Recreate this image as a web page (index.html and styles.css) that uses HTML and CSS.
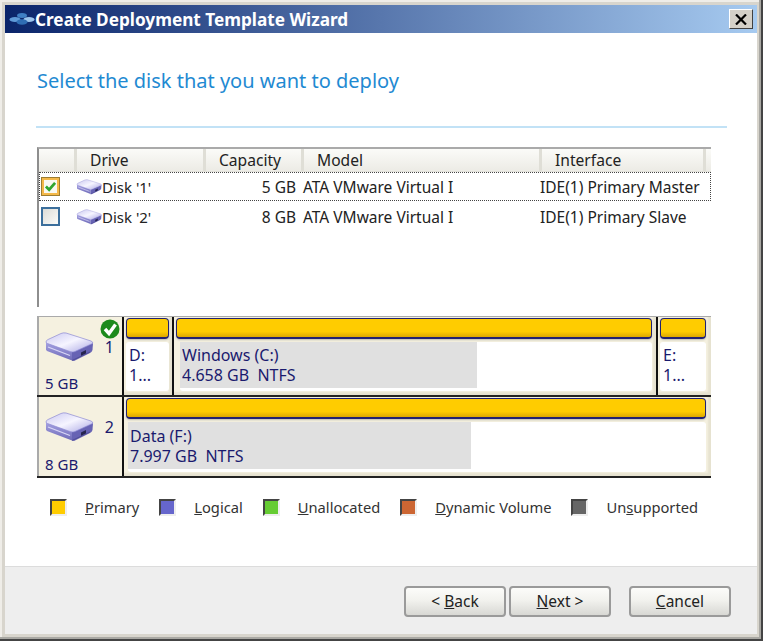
FILE: index.html
```html
<!DOCTYPE html>
<html lang="en">
<head>
<meta charset="utf-8">
<title>Create Deployment Template Wizard</title>
<link rel="stylesheet" href="styles.css">
</head>
<body>
<svg class="defs" width="0" height="0" aria-hidden="true">
  <defs>
    <linearGradient id="dtop" x1="0" y1="0" x2="1" y2="1"><stop offset="0" stop-color="#c9c7f0"/><stop offset=".5" stop-color="#f6f5ff"/><stop offset="1" stop-color="#a9a6e4"/></linearGradient>
    <linearGradient id="dleft" x1="0" y1="0" x2="0" y2="1"><stop offset="0" stop-color="#a5a2e2"/><stop offset="1" stop-color="#6f6bb8"/></linearGradient>
    <symbol id="disk" viewBox="0 0 50 30">
      <path d="M2 10 L28 20 L28 28.5 L3 19 Q1.500 18 2 16 Z" fill="url(#dleft)"/>
      <path d="M28 20 L49 11 L48.500 18 Q48 20 46 21 L30 29 L28 28.500 Z" fill="#6763b4"/>
      <path d="M2 10 Q2 8.500 4 7.500 L17 1.500 Q19 .5 22 1 L47 9 Q49.500 10 48.500 11.500 L31 19.500 Q29 20.500 26 19.500 L3.500 11.500 Q2 11 2 10 Z" fill="url(#dtop)" stroke="#8d89d2" stroke-width=".7"/>
      <path d="M4 15 L26 23.500" stroke="#d8d6f6" stroke-width="1.300" fill="none"/>
      <path d="M37 20.500 L42 18 L42 21.500 L37 24 Z" fill="#26254f"/>
      <path d="M28 28.500 L46 20" stroke="#4a478e" stroke-width=".8" fill="none"/>
    </symbol>
  </defs>
</svg>
<div class="window">
  <header class="titlebar">
    <svg class="app-icon" viewBox="0 0 26 14" aria-hidden="true">
      <ellipse cx="13" cy="3.500" rx="5" ry="2.500" fill="#3f7fc4"/>
      <ellipse cx="6" cy="7.500" rx="5.500" ry="2.500" fill="#5f9ad8"/>
      <ellipse cx="20" cy="7.500" rx="5.500" ry="2.500" fill="#9cc4ec"/>
      <ellipse cx="13" cy="10" rx="5.500" ry="2.800" fill="#2f6db4"/>
    </svg>
    <span class="title-text">Create Deployment Template Wizard</span>
    <button class="close" aria-label="Close">
      <svg viewBox="0 0 12 11" aria-hidden="true"><path d="M1 .5 L11 10.500 M11 .5 L1 10.500" stroke="#000" stroke-width="2.200" fill="none"/></svg>
    </button>
  </header>
  <main class="content">
    <h1 class="heading">Select the disk that you want to deploy</h1>
    <div class="rule"></div>

    <section class="list">
      <div class="row head">
        <span class="hcell"></span>
        <span class="hcell pad">Drive</span>
        <span class="hcell pad">Capacity</span>
        <span class="hcell pad">Model</span>
        <span class="hcell pad">Interface</span>
        <span class="hcell"></span>
      </div>
      <div class="row item focused">
        <span class="cell"><span class="check on"><svg viewBox="0 0 14 12" aria-hidden="true"><path d="M2 6 L5.500 9.500 L12 2" stroke="#2fa52f" stroke-width="3" fill="none"/></svg></span></span>
        <span class="cell"><svg class="mini-disk"><use href="#disk"/></svg>Disk '1'</span>
        <span class="cell wide cap">5 GB</span>
        <span class="cell wide">ATA VMware Virtual I</span>
        <span class="cell wide">IDE(1) Primary Master</span>
      </div>
      <div class="row item second-item">
        <span class="cell"><span class="check"></span></span>
        <span class="cell"><svg class="mini-disk"><use href="#disk"/></svg>Disk '2'</span>
        <span class="cell wide cap">8 GB</span>
        <span class="cell wide">ATA VMware Virtual I</span>
        <span class="cell wide">IDE(1) Primary Slave</span>
      </div>
    </section>

    <section class="map">
      <div class="disk-row">
        <div class="disk-info">
          <svg class="big-disk"><use href="#disk"/></svg>
          <span class="disk-num">1</span>
          <svg class="ok" viewBox="0 0 20 20" aria-hidden="true"><circle cx="10" cy="10" r="9.500" fill="#1c8a1c"/><path d="M5 10 L9 14.500 L15.500 5.500" stroke="#fff" stroke-width="3.400" fill="none"/></svg>
          <span class="disk-size">5 GB</span>
        </div>
        <div class="part small">
          <div class="bar"></div>
          <div class="part-body"><span>D:</span><span>1...</span></div>
        </div>
        <div class="part grow win">
          <div class="bar"></div>
          <div class="part-body">
            <div class="used used-win"></div>
            <span>Windows (C:)</span><span>4.658 GB&nbsp; NTFS</span>
          </div>
        </div>
        <div class="part small last">
          <div class="bar"></div>
          <div class="part-body"><span>E:</span><span>1...</span></div>
        </div>
      </div>
      <div class="disk-row second">
        <div class="disk-info">
          <svg class="big-disk"><use href="#disk"/></svg>
          <span class="disk-num">2</span>
          <span class="disk-size">8 GB</span>
        </div>
        <div class="part grow last">
          <div class="bar"></div>
          <div class="part-body">
            <div class="used used-data"></div>
            <span>Data (F:)</span><span>7.997 GB&nbsp; NTFS</span>
          </div>
        </div>
      </div>
    </section>

    <section class="legend">
      <span class="swatch s-primary"></span><span class="lg"><u>P</u>rimary</span>
      <span class="swatch s-logical"></span><span class="lg"><u>L</u>ogical</span>
      <span class="swatch s-unalloc"></span><span class="lg"><u>U</u>nallocated</span>
      <span class="swatch s-dynamic"></span><span class="lg"><u>D</u>ynamic Volume</span>
      <span class="swatch s-unsup"></span><span class="lg">Un<u>s</u>upported</span>
    </section>
  </main>
  <footer class="footer">
    <button class="btn">&lt; <u>B</u>ack</button>
    <button class="btn next"><u>N</u>ext &gt;</button>
    <button class="btn cancel"><u>C</u>ancel</button>
  </footer>
</div>
</body>
</html>
```

FILE: styles.css
```css
* { box-sizing: border-box; }
html, body { margin: 0; padding: 0; }
body { font-family: "Noto Sans", sans-serif; font-size: 15px; color: #222; background: #fff; }
.defs { position: absolute; }
.window {
  width: 763px; height: 641px; padding: 5px 6px 7px 5px;
  display: flex; flex-direction: column; overflow: hidden;
  background: #d8d5cd;
  box-shadow: inset -2px -2px 0 #444, inset -4px -4px 0 #a9a8a3, inset 2px 2px 0 #efede8;
}
.titlebar {
  height: 28px; flex: none; display: flex; align-items: center;
  padding: 0 4px 0 4px; color: #fff;
  background: linear-gradient(90deg, #0a246a 0%, #a6caf0 100%);
}
.app-icon { width: 26px; height: 14px; flex: none; }
.title-text { font-weight: 700; font-size: 17.200px; flex: 1; white-space: nowrap; }
.close {
  width: 24px; height: 20px; padding: 0; display: flex; align-items: center; justify-content: center;
  background: #d4d0c8; border: 1px solid; border-color: #fff #404040 #404040 #fff;
}
.close svg { width: 12px; height: 11px; }
.content { flex: 1; background: #fff; padding: 0 30px 0 31px; display: flex; flex-direction: column; min-height: 0; }
.heading {
  margin: 0; height: 93px; display: flex; align-items: center; padding: 1px 0 0 1px;
  font-size: 20px; font-weight: 400; color: #1f8ad2; white-space: nowrap;
}
.rule { height: 2px; background: #c2e2f6; flex: none; }

.list { margin: 19px 0 0 1px; width: 674px; height: 160px; flex: none; border-left: 2px solid #8e8e8e; border-top: 2px solid #aaa; }
.row { display: grid; align-items: center; }
.head { grid-template-columns: 38px 129px 98px 238px 164px 1fr; height: 23px; background: linear-gradient(#fbfbf8, #ecebe5); border-bottom: 1px solid #e2e1da; font-size: 15.600px; }
.hcell { height: 100%; display: flex; align-items: center; border-right: 3px solid #dfded6; }
.hcell.pad { padding-left: 13px; }
.hcell:last-child { border-right: none; }
.item { grid-template-columns: 36px 126px 101px 237px 1fr; height: 29px; border: 1px dotted transparent; }
.item.focused { border-color: #444; }
.second-item { margin-top: 1px; }
.cell { white-space: nowrap; display: flex; align-items: center; }
.cap { justify-content: flex-end; padding-right: 7px; }
.wide { font-size: 15.500px; }
.check {
  width: 19px; height: 19px; margin-left: 1px; display: flex; align-items: center; justify-content: center;
  border: 2px solid #3c6f9c; background: linear-gradient(135deg, #dcdcd7, #fbfbf9);
}
.check.on { border-color: #f4b848; box-shadow: 0 0 0 1px #9c7c30; background: #f8f8f2; width: 17px; height: 17px; margin-left: 2px; }
.check svg { width: 13px; height: 11px; }
.mini-disk { width: 26px; height: 16px; flex: none; }

.map { width: 674px; height: 162px; margin: 9px 0 0 1px; flex: none; border-top: 1px solid #aaa; background: #f5f1e0; }
.disk-row { height: 80px; display: flex; background: #111; gap: 2px; border-bottom: 2px solid #222; }
.disk-row.second { height: 81px; }
.disk-info { width: 85px; flex: none; position: relative; background: #f5f1e0; border-left: 2px solid #aaa; }
.big-disk { position: absolute; left: 5px; top: 15px; width: 50px; height: 30px; }
.disk-num { position: absolute; right: 8px; top: 19px; font-size: 16px; color: #1a1a6e; }
.disk-size { position: absolute; left: 6px; bottom: 2px; font-size: 15px; color: #1a1a6e; }
.ok { position: absolute; right: 2px; top: 2px; width: 20px; height: 20px; }
.part { background: #f5f1e0; padding: 1px 3px 4px 2px; display: flex; flex-direction: column; box-shadow: inset -3px -3px 2px #e6e2d0; }
.part.small { width: 48px; flex: none; }
.part.small.last { width: 53px; padding-right: 5px; }
.part.grow { flex: 1; }
.part.last { padding-right: 5px; }
.part.win { padding-right: 4px; }
.bar { height: 21px; flex: none; border: 1px solid #222270; border-bottom-width: 2px; border-radius: 4px; background: linear-gradient(#ffcc00 70%, #dca800); box-shadow: 0 1px 2px #bdbdb4; }
.part-body {
  flex: 1; margin-top: 3px; padding: 3px 0 0 3px; background: #fff; position: relative; border-radius: 3px;
  display: flex; flex-direction: column; color: #1a1a6e; font-size: 16px; line-height: 20px;
}
.win .part-body { margin-left: 4px; padding-left: 2px; }
.second .part-body { margin-left: 2px; padding: 4px 0 0 2px; }
.part-body span { position: relative; white-space: nowrap; overflow: hidden; }
.used { position: absolute; left: 0; top: 0; bottom: 3px; background: #e0e0e0; }
.used-win { width: 297px; }
.used-data { width: 343px; }

.legend { display: flex; align-items: center; margin-top: 19px; padding-left: 14px; color: #333; font-size: 14.700px; }
.swatch { width: 17px; height: 17px; flex: none; border: 2px solid; border-color: #444 #eee #eee #444; margin-right: 18px; }
.lg { margin-right: 20px; white-space: nowrap; }
.s-primary { background: #ffcc00; }
.s-logical { background: #6666cc; }
.s-unalloc { background: #66cc33; }
.s-dynamic { background: #cc6633; }
.s-unsup { background: #666; }

.footer {
  height: 68px; flex: none; background: #eee; border-top: 1px solid #dcdcdc;
  display: flex; align-items: flex-start; padding: 19px 26px 0 399px; gap: 3px;
}
.btn {
  width: 102px; height: 31px; font: inherit; font-size: 15.500px; line-height: 24px; color: #222; padding: 0 0 2px; border: 2px solid #9a9a9a; border-radius: 4px;
  background: linear-gradient(#fcfcfa, #f2f2ee 45%, #d8d8d4);
}
.cancel { margin-left: 15px; }
```
